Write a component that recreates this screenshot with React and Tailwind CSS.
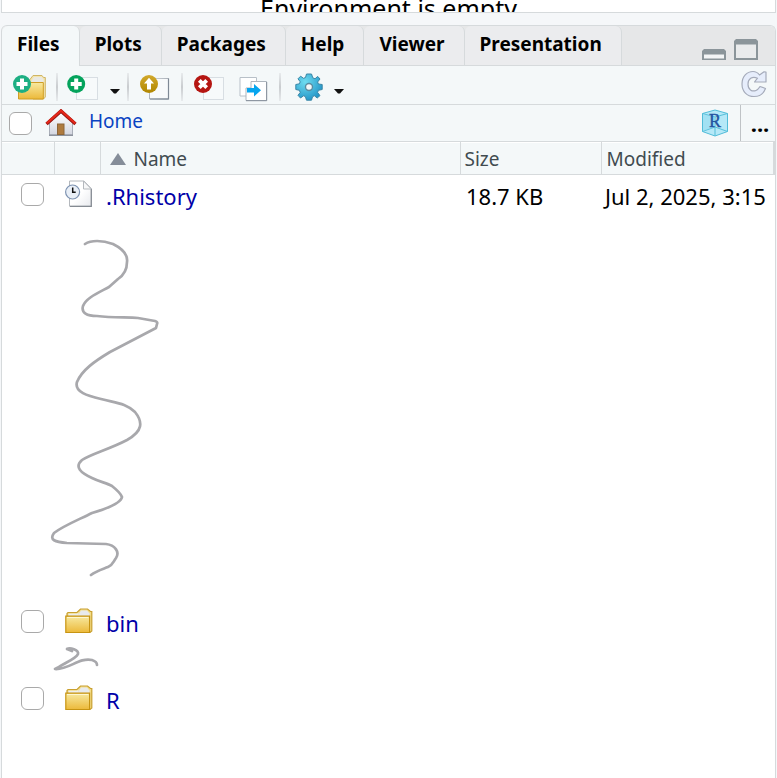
import React from "react";

const tabs = ["Files", "Plots", "Packages", "Help", "Viewer", "Presentation"];

function Defs() {
  return (
    <svg width="0" height="0" className="absolute" aria-hidden="true">
      <defs>
        <linearGradient id="folder" x1="0" y1="0" x2="0" y2="1">
          <stop offset="0" stopColor="#f7e9a0" />
          <stop offset="1" stopColor="#ecb93a" />
        </linearGradient>
        <linearGradient id="page" x1="0" y1="0" x2="1" y2="1">
          <stop offset="0.5" stopColor="#ffffff" />
          <stop offset="1" stopColor="#e8eaee" />
        </linearGradient>
        <linearGradient id="pageEdge" x1="0" y1="0" x2="1" y2="1">
          <stop offset="0" stopColor="#d5d9de" />
          <stop offset="1" stopColor="#7f8894" />
        </linearGradient>
        <linearGradient id="gold" x1="0" y1="0" x2="0" y2="1">
          <stop offset="0" stopColor="#d2a92c" />
          <stop offset="1" stopColor="#b08600" />
        </linearGradient>
        <radialGradient id="gear" cx="0.35" cy="0.3" r="0.8">
          <stop offset="0" stopColor="#6fdcf0" />
          <stop offset="1" stopColor="#1d8fc4" />
        </radialGradient>
        <linearGradient id="wall" x1="0" y1="0" x2="0" y2="1">
          <stop offset="0" stopColor="#ffffff" />
          <stop offset="1" stopColor="#d3d6e0" />
        </linearGradient>
      </defs>
    </svg>
  );
}

function Folder() {
  return (
    <svg width="28" height="26" viewBox="0 0 28 26" className="block">
      <path d="M2 8V5.5L3 4.5H12L15.5 1H22.5L25.5 3.5H26.8V23L25 24.5H20Z" fill="#f3dd8a" stroke="#c9a030" strokeWidth="1.2" />
      <path d="M12.5 8L16 2.5H22L24.5 5.5V9Z" fill="#e8eaec" />
      <path d="M3.5 5.7H12L13.5 4.6V8H3.5Z" fill="#eceeef" />
      <path d="M0.8 8.2H24.6V24.5H0.8Z" fill="url(#folder)" stroke="#c79412" strokeWidth="1.2" />
      <path d="M2 9.5H23.3" stroke="#fff7cf" strokeWidth="1" />
    </svg>
  );
}

function HistoryFile() {
  return (
    <svg width="28" height="28" viewBox="0 0 28 28" className="block">
      <path d="M4.5 1H19L26.3 8.5V26.3H4.5Z" fill="url(#page)" stroke="#b4b8bd" />
      <path d="M26.3 9V26.3H5" fill="none" stroke="#858b92" strokeWidth="1.2" />
      <path d="M18.5 1V9H26.3Z" fill="#f6f7f8" stroke="#b4b8bd" />
      <circle cx="7.6" cy="12" r="7" fill="#e9eff7" stroke="#7e93b2" strokeWidth="1.2" />
      <path d="M7.7 7.5V12.3H10.7" fill="none" stroke="#111" strokeWidth="1.5" />
    </svg>
  );
}

function NewFolderIcon() {
  return (
    <svg width="34" height="28" viewBox="0 0 34 28" className="block">
      <path d="M15 9L20 2.5H29L30.5 4.5H32.3V24L30.5 26H20Z" fill="#f3e5ae" stroke="#d0b565" />
      <path d="M18 9L21 4H28.5L30.5 6.5V10Z" fill="#e9e9e3" />
      <path d="M5.5 9.5H30.3V26H5.5Z" fill="url(#folder)" stroke="#d09e24" />
      <circle cx="9" cy="11" r="9" fill="#1daf83" />
      <path d="M9 5.5V16.5M3.5 11H14.5" stroke="#fff" strokeWidth="4" />
    </svg>
  );
}

function NewFileIcon() {
  return (
    <svg width="32" height="28" viewBox="0 0 32 28" className="block">
      <rect x="9.5" y="4.5" width="21" height="22" fill="#f7fafb" stroke="#d8dee3" />
      <circle cx="9.2" cy="11" r="9" fill="#04a35c" />
      <path d="M9.2 5.5V16.5M3.7 11H14.7" stroke="#fff" strokeWidth="4" />
    </svg>
  );
}

function UploadIcon() {
  return (
    <svg width="30" height="28" viewBox="0 0 30 28" className="block">
      <path d="M9.5 5.5H28.5V26H9.5Z" fill="#f8fafb" stroke="url(#pageEdge)" />
      <path d="M28.5 5.5V26H10" fill="none" stroke="#7f8995" strokeWidth="1.2" />
      <circle cx="9" cy="11" r="9" fill="url(#gold)" />
      <path d="M9 4.7L14 10.5H11V16.5H7V10.5H4Z" fill="#fff" />
    </svg>
  );
}

function DeleteIcon() {
  return (
    <svg width="31" height="28" viewBox="0 0 31 28" className="block">
      <rect x="9.5" y="4.5" width="20" height="22" fill="#f7fafb" stroke="#d8dee3" />
      <circle cx="9" cy="11" r="9" fill="#b51612" />
      <path d="M5.3 7.3L12.7 14.7M12.7 7.3L5.3 14.7" stroke="#fff" strokeWidth="3.8" />
    </svg>
  );
}

function MoveIcon() {
  return (
    <svg width="29" height="26" viewBox="0 0 29 26" className="block">
      <path d="M1 1.5H17.5V20H1Z" fill="#fff" stroke="#b8c0c8" />
      <path d="M12 5.5H27.5V24.5H7V12H12Z" fill="#fff" stroke="#adb5bd" />
      <path d="M27.7 6V24.7H7" fill="none" stroke="#87919c" />
      <path d="M8 12H15V8L22 14.3L15 20.5V16.5H8Z" fill="#06a5ee" />
    </svg>
  );
}

function GearIcon() {
  return (
    <svg width="28" height="28" viewBox="-14 -14 28 28" className="block">
      <path
        d="M-2.5-13H2.5L3.8-9.2L6-8.2L8.7-10.6L11-8L8.6-5L9.4-3L13.2-2.5V2.5L9.4 3.3L8.6 5.5L11 8.6L8.2 11L5.5 8.8L3.6 9.6L2.5 13.2H-2.5L-3.6 9.6L-5.5 8.8L-8.5 11L-11 8.3L-8.8 5.5L-9.6 3.3L-13.2 2.5V-2.5L-9.6-3.2L-8.8-5.2L-11-8.2L-8.4-10.8L-5.5-8.7L-3.5-9.5Z"
        fill="url(#gear)" stroke="#3b86a5" strokeLinejoin="round"
      />
      <circle r="3.5" fill="#f4f8f9" stroke="#5a8ba0" strokeWidth="1.4" />
    </svg>
  );
}

function HomeIcon() {
  return (
    <svg width="32" height="28" viewBox="0 0 32 28" className="block">
      <path d="M4.5 14L16 4L27.5 14V26H4.5Z" fill="url(#wall)" stroke="#a9aeb8" />
      <path d="M4 26.3H28" stroke="#8d939e" strokeWidth="1.4" />
      <rect x="12.5" y="15" width="6.5" height="10.5" fill="#ae7a3e" stroke="#8d6638" />
      <path d="M1.5 15L16 2L30.5 15" fill="none" stroke="#9f1710" strokeWidth="3.4" />
      <path d="M1.8 14.3L16 1.7L30.2 14.3" fill="none" stroke="#e5281a" strokeWidth="2" />
    </svg>
  );
}

function ProjectIcon() {
  return (
    <svg width="28" height="28" viewBox="0 0 28 28" className="block">
      <path d="M14 1L26.5 4.5V22.5L14 27L1.5 22.5V4.5Z" fill="#b5e8f7" stroke="#52bcd8" />
      <path d="M1.5 4.5L14 8L26.5 4.5M14 8V27M1.5 22.5L14 18L26.5 22.5" fill="none" stroke="#55bfd9" />
      <path d="M2 5L14 8V18L2 22Z" fill="#8fd9ef" opacity="0.5" />
      <text x="14" y="18" textAnchor="middle" fontSize="18" fill="#2554a0" stroke="#2554a0" strokeWidth="0.4" className="font-['Liberation_Serif',serif]">R</text>
    </svg>
  );
}

function RefreshIcon() {
  return (
    <svg width="26" height="28" viewBox="0 0 26 28" className="block">
      <path
        d="M18.5 5L23 1.8L25 2V12H13.5L16.5 8.2C11 5.7 7 9 7 14.2C7 19.5 11 22 15 20.5C17.5 19.5 18 18 19 16.5L24.5 18.5C22.5 24 18 26.5 13 26.5C6 26.5 1 21.5 1 14C1 6.5 6 1.5 12 1.5C15 1.5 17 3 18.5 5Z"
        fill="#e6edfb" stroke="#a5abba" strokeWidth="1.2" strokeLinejoin="round"
      />
    </svg>
  );
}

function Caret() {
  return (
    <svg width="10" height="5" viewBox="0 0 10 5" className="block">
      <path d="M0 0H10L6 4.5H4Z" fill="#111" />
    </svg>
  );
}

function Separator() {
  return <span className="h-7 w-0.5 shrink-0 bg-linear-to-b from-[#e8ebed] via-[#c9cccf] to-[#e8ebed]" />;
}

function ToolButton({ label, children }) {
  return (
    <button type="button" aria-label={label} className="shrink-0">
      {children}
    </button>
  );
}

function Check({ label }) {
  return (
    <input
      type="checkbox"
      aria-label={label}
      className="block size-[23px] shrink-0 appearance-none rounded-md border border-[#a9a9a9] bg-white"
    />
  );
}

function FileRow({ name, icon, size, modified }) {
  return (
    <tr className="h-[39px]">
      <td className="pl-[19px]"><Check label={`Select ${name}`} /></td>
      <td className="pl-[11px]">{icon}</td>
      <td className="pt-1 pl-1.5"><a href="#" className="text-[#0000a8]">{name}</a></td>
      <td className="pt-1 pl-1.5">{size}</td>
      <td className="pt-1 pl-1">{modified}</td>
    </tr>
  );
}

export default function App() {
  return (
    <div className="flex h-screen flex-col overflow-hidden bg-[#f5f7f9] px-px font-['Noto_Sans',sans-serif] text-black">
      <Defs />
      <section className="flex h-[13px] shrink-0 items-center justify-center overflow-hidden border-x border-b border-[#d6dadc] bg-white text-[25px] leading-8">
        <p className="pt-1">Environment is empty</p>
      </section>

      <section className="mt-3 flex min-h-0 flex-1 flex-col overflow-hidden rounded-t-md border border-b-0 border-[#d6dadc] bg-white">
        <div className="flex h-10 shrink-0 bg-[#e6e7e8]">
          <div role="tablist" className="flex">
            {tabs.map((t, i) => (
              <button
                key={t}
                type="button"
                role="tab"
                aria-selected={i === 0}
                className={
                  i === 0
                    ? "rounded-t-md border-r border-[#d6dadc] bg-[#f4f8f9] pr-[19px] pb-[3px] pl-[15px] text-[19px] font-bold"
                    : "rounded-t-md border-r border-b border-[#d6dadc] bg-[#ebecee] pr-[19px] pb-0.5 pl-[15px] text-[19px] font-bold"
                }
              >
                {t}
              </button>
            ))}
          </div>
          <div className="flex flex-1 items-end justify-end gap-2 border-b border-[#d6dadc] pr-[17px] pb-[5px]">
            <button type="button" aria-label="Minimize">
              <svg width="24" height="11" viewBox="0 0 24 11" className="block">
                <path d="M0 11V2L2 0H22L24 2V11Z" fill="#8b959a" />
                <path d="M2 5.5H22V9.5H2Z" fill="#f3f5f6" />
              </svg>
            </button>
            <button type="button" aria-label="Maximize">
              <svg width="24" height="21" viewBox="0 0 24 21" className="block">
                <path d="M0 21V2L2 0H22L24 2V21Z" fill="#8b959a" />
                <path d="M2 5.5H22V19H2Z" fill="#e9ebec" />
              </svg>
            </button>
          </div>
        </div>

        <div className="flex h-[39px] shrink-0 items-center border-b border-[#d6dadc] bg-[#f4f8f9] pt-1 pr-2 pl-[11px]">
          <div className="flex items-center gap-[9px]">
            <ToolButton label="New folder"><NewFolderIcon /></ToolButton>
            <Separator />
            <button type="button" aria-label="New blank file" className="flex items-center gap-[11px]">
              <NewFileIcon />
              <span className="pt-2"><Caret /></span>
            </button>
          </div>
          <div className="flex items-center gap-[11px] pl-[7px]">
            <Separator />
            <ToolButton label="Upload"><UploadIcon /></ToolButton>
            <Separator />
            <ToolButton label="Delete"><DeleteIcon /></ToolButton>
            <ToolButton label="Move"><span className="block pt-1 pl-[3px]"><MoveIcon /></span></ToolButton>
            <Separator />
            <button type="button" aria-label="More file commands" className="flex items-center gap-[11px] pl-[3px]">
              <GearIcon />
              <span className="pt-2"><Caret /></span>
            </button>
          </div>
          <div className="ml-auto"><ToolButton label="Refresh"><RefreshIcon /></ToolButton></div>
        </div>

        <nav aria-label="Path" className="flex h-[37px] shrink-0 items-center border-b border-[#d6dadc] bg-[#f4f8f9] pl-[7px]">
          <Check label="Select all" />
          <a href="#" aria-label="Home folder" className="ml-[13px]"><HomeIcon /></a>
          <a href="#" className="ml-3 pb-1 text-[19px] text-[#0a43c2]">Home</a>
          <button type="button" aria-label="Project directory" className="mr-[11px] ml-auto"><ProjectIcon /></button>
          <button type="button" className="flex h-full w-[35px] items-center justify-center border-l border-[#bfc3c6] pl-1 text-[22px] font-bold">...</button>
        </nav>

        <div className="min-h-0 flex-1 overflow-hidden">
          <table className="w-full table-fixed border-collapse text-[22px] leading-7 whitespace-nowrap">
            <colgroup>
              <col className="w-[52px]" />
              <col className="w-[46px]" />
              <col className="w-[360px]" />
              <col className="w-[141px]" />
              <col />
            </colgroup>
            <thead>
              <tr className="h-8 border-t border-b border-t-white border-b-[#d6dadc] bg-[#f4f8f9] text-left text-[19px] text-[#414b50]">
                <th aria-label="Select" className="border-r border-[#d6dadc]" />
                <th aria-label="Type" className="border-r border-[#d6dadc]" />
                <th className="border-r border-[#d6dadc] pl-[9px] font-normal">
                  <button type="button" className="flex items-center gap-2">
                    <svg width="16" height="12" viewBox="0 0 16 12"><path d="M8 0L16 12H0Z" fill="#858d99" /></svg>
                    Name
                  </button>
                </th>
                <th className="border-r border-[#d6dadc] pl-1 font-normal">Size</th>
                <th className="border-r-2 border-[#d6dadc] pl-[5px] font-normal">Modified</th>
              </tr>
            </thead>
            <tbody>
              <FileRow name=".Rhistory" icon={<HistoryFile />} size="18.7 KB" modified="Jul 2, 2025, 3:15" />
              <tr>
                <td colSpan={5}>
                  <svg width="200" height="388" viewBox="2 214 200 388" className="block" fill="none" stroke="#a8a8ac" strokeWidth="2.7" strokeLinecap="round" strokeLinejoin="round">
                    <path d="M85 244C91 240 102 240 113 244C123 249 128 255 127 262C127 270 124 275 118 279L109 287C98 293 86 298 83 306C81 313 87 316 97 316C113 318 128 317 138 318L155 321Q158 322 157 324L156 328L110 352C95 361 82 370 77 382C74 392 88 396 101 399C116 403 126 403 135 412C143 422 143 431 127 440C110 449 91 454 82 460C74 467 81 473 92 478C100 482 107 483 112 486C117 490 121 494 122 497C121 503 109 508 92 513C78 520 63 526 54 533C49 540 55 542 67 543L106 544C115 545 120 552 116 558C113 562 113 565 108 567C100 570 96 571 91 575" />
                  </svg>
                </td>
              </tr>
              <FileRow name="bin" icon={<Folder />} />
              <tr>
                <td colSpan={5}>
                  <svg width="200" height="38" viewBox="2 641 200 38" className="block" fill="none" stroke="#a8a8ac" strokeWidth="2.7" strokeLinecap="round" strokeLinejoin="round">
                    <path d="M67 649C70 647 79 650 78 654C76 659 64 663 59 667L55 669C69 670 79 657 92 660C95 661 97 663 97 665M67 649L72 651" />
                  </svg>
                </td>
              </tr>
              <FileRow name="R" icon={<Folder />} />
            </tbody>
          </table>
        </div>
      </section>
    </div>
  );
}
